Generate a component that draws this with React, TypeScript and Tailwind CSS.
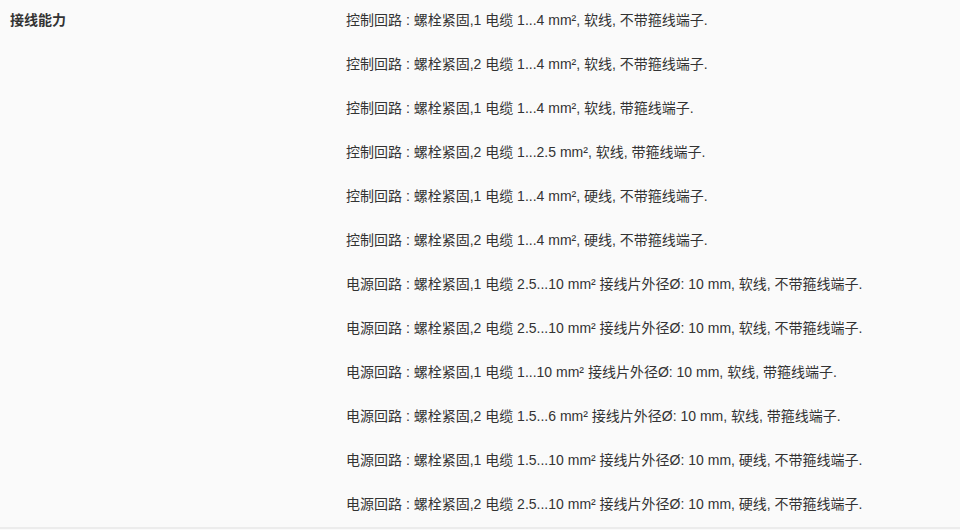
const rows = [
  '控制回路 : 螺栓紧固,1 电缆 1...4 mm², 软线, 不带箍线端子.',
  '控制回路 : 螺栓紧固,2 电缆 1...4 mm², 软线, 不带箍线端子.',
  '控制回路 : 螺栓紧固,1 电缆 1...4 mm², 软线, 带箍线端子.',
  '控制回路 : 螺栓紧固,2 电缆 1...2.5 mm², 软线, 带箍线端子.',
  '控制回路 : 螺栓紧固,1 电缆 1...4 mm², 硬线, 不带箍线端子.',
  '控制回路 : 螺栓紧固,2 电缆 1...4 mm², 硬线, 不带箍线端子.',
  '电源回路 : 螺栓紧固,1 电缆 2.5...10 mm² 接线片外径Ø: 10 mm, 软线, 不带箍线端子.',
  '电源回路 : 螺栓紧固,2 电缆 2.5...10 mm² 接线片外径Ø: 10 mm, 软线, 不带箍线端子.',
  '电源回路 : 螺栓紧固,1 电缆 1...10 mm² 接线片外径Ø: 10 mm, 软线, 带箍线端子.',
  '电源回路 : 螺栓紧固,2 电缆 1.5...6 mm² 接线片外径Ø: 10 mm, 软线, 带箍线端子.',
  '电源回路 : 螺栓紧固,1 电缆 1.5...10 mm² 接线片外径Ø: 10 mm, 硬线, 不带箍线端子.',
  '电源回路 : 螺栓紧固,2 电缆 2.5...10 mm² 接线片外径Ø: 10 mm, 硬线, 不带箍线端子.',
]

export default function App() {
  return (
    <div
      className="min-h-[530px] bg-[#fafafa] text-[#333]"
      style={{ fontFamily: '"Liberation Sans", "Noto Sans CJK SC", sans-serif' }}
    >
      <div className="flex border-b-2 border-[#ececec]">
        <div className="w-[336px] shrink-0 px-[10px] pt-[8px] text-[14px] font-bold leading-[24px]">
          接线能力
        </div>
        <div className="flex flex-col px-[10px]">
          {rows.map((r, i) => (
            <div key={i} className="pt-[8px] pb-[12px] text-[14px] leading-[24px] last:pb-[11px]">
              {r}
            </div>
          ))}
        </div>
      </div>
    </div>
  )
}
